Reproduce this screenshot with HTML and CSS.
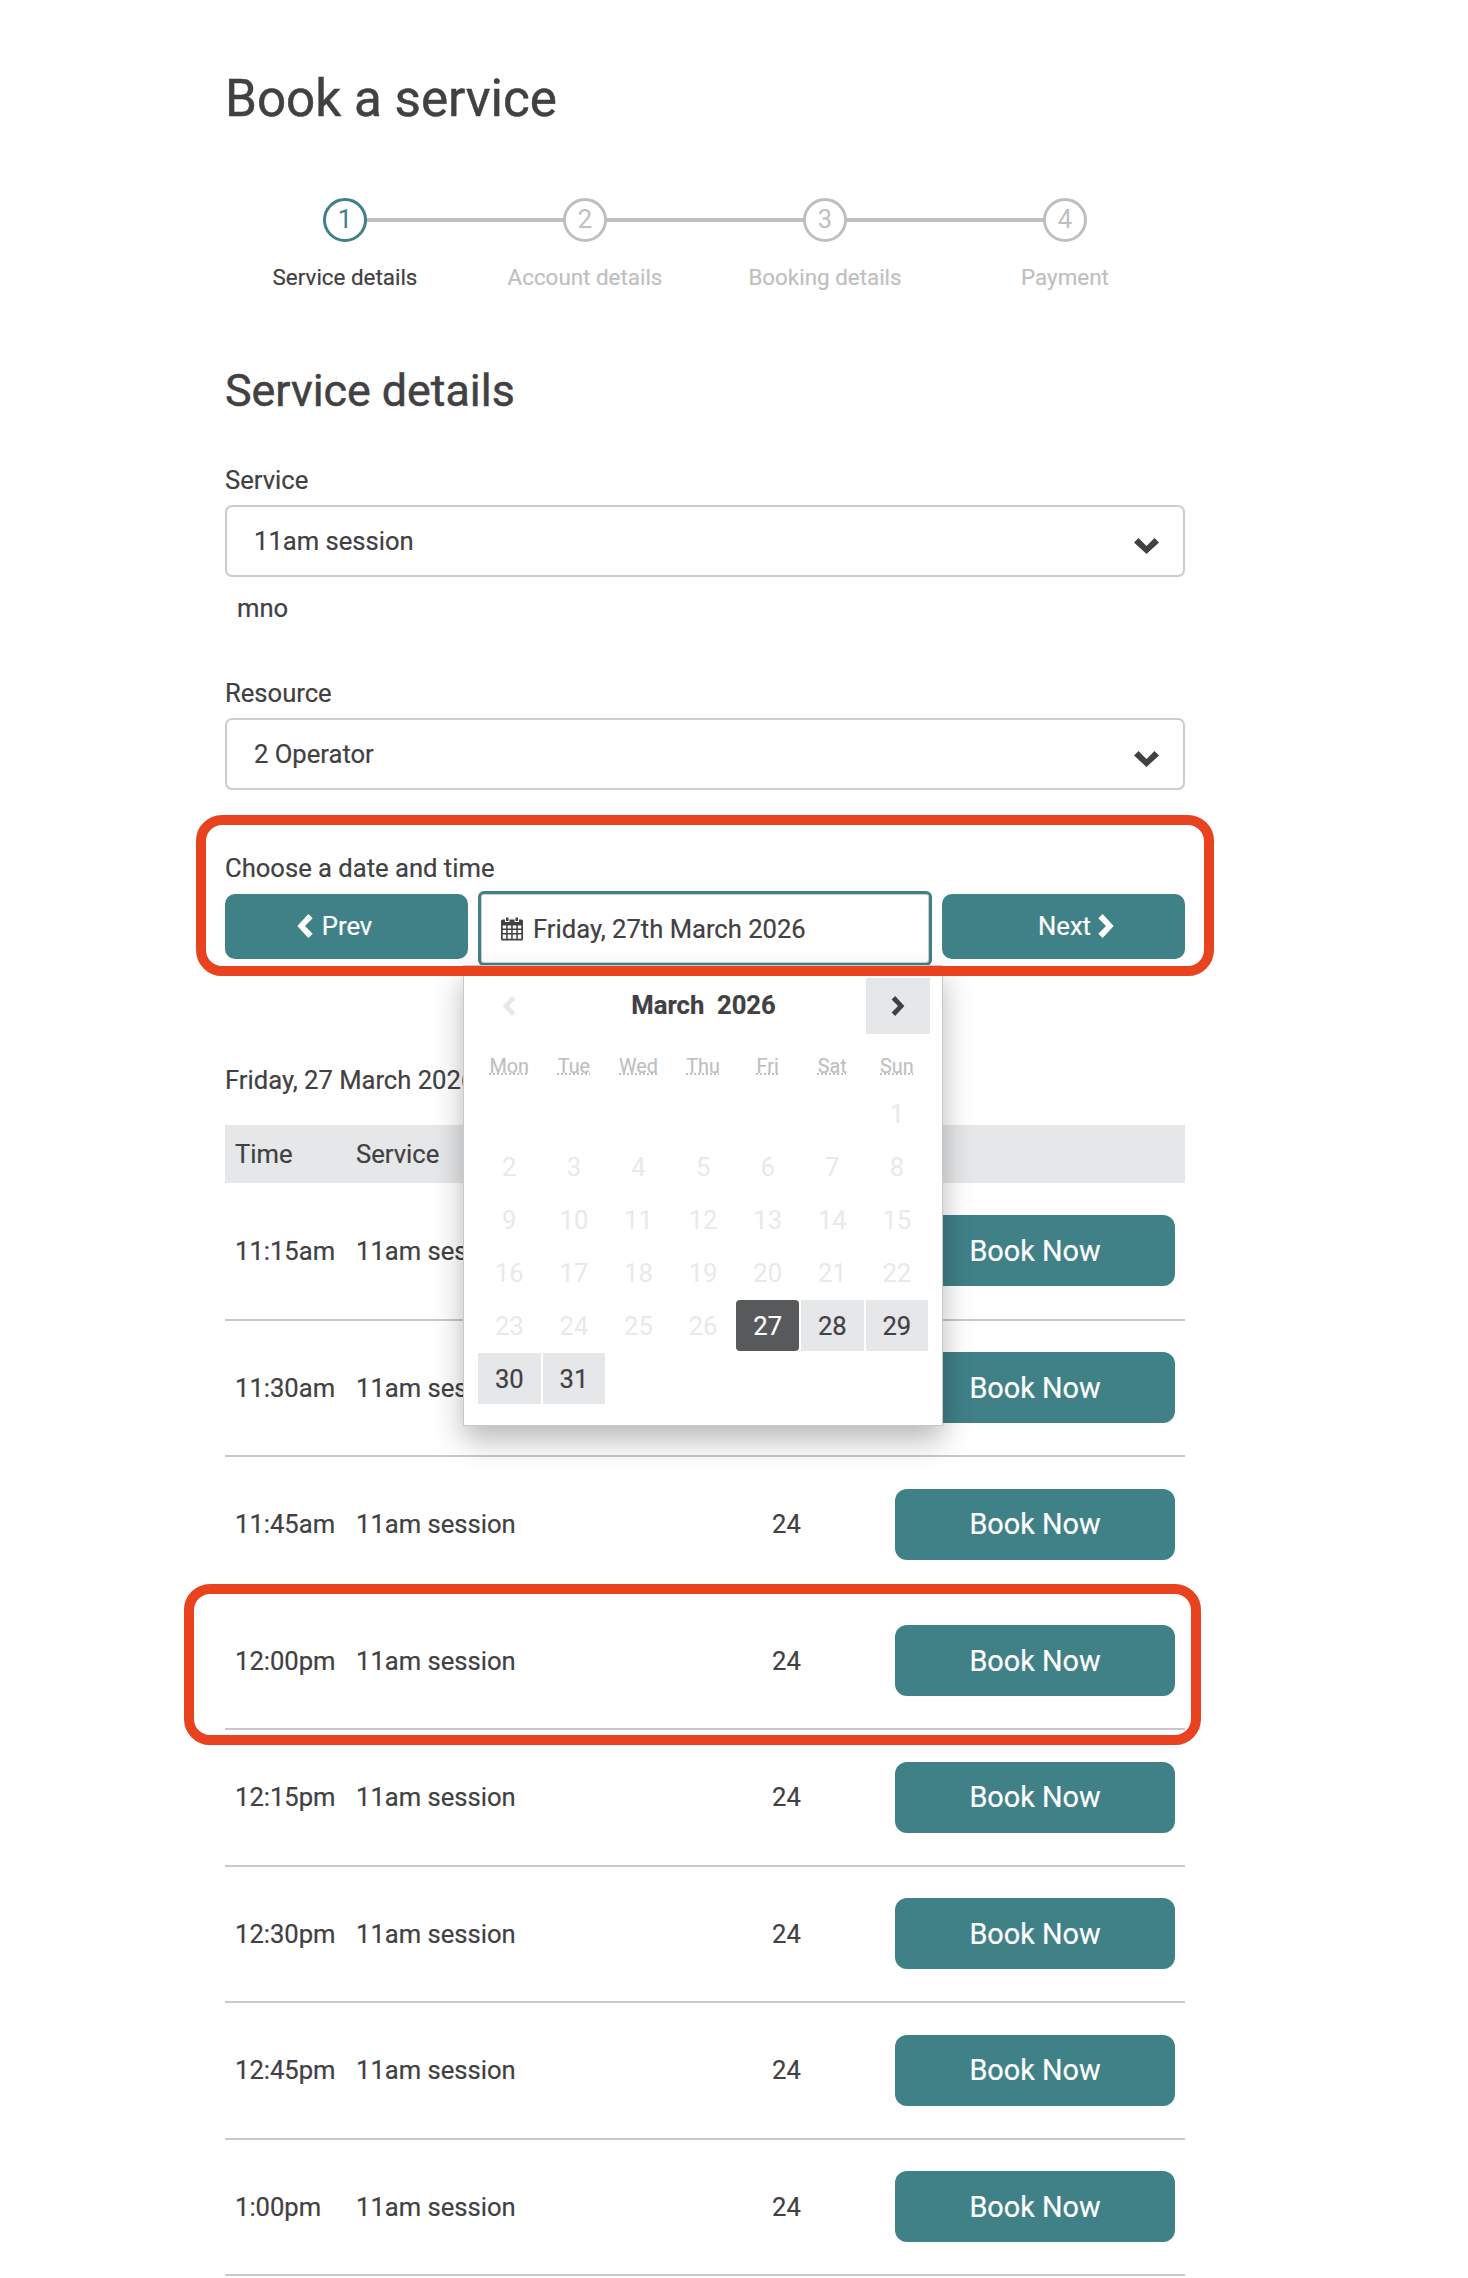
FILE: index.html
```html
<!DOCTYPE html>
<html lang="en">
<head>
<meta charset="utf-8">
<title>Book a service</title>
<link rel="stylesheet" href="styles.css">
</head>
<body>
<svg class="defs" width="0" height="0" aria-hidden="true">
  <symbol id="chev-r" viewBox="0 0 16 25"><path d="M4.500 0L16 12.500 4.500 25 0 20.500 8 12.500 0 4.500z"/></symbol>
  <symbol id="chev-l" viewBox="0 0 16 25"><path d="M11.500 0L16 4.500 8 12.500 16 20.500 11.500 25 0 12.500z"/></symbol>
  <symbol id="chev-d" viewBox="0 0 25 16"><path d="M0 4.500L4.500 0 12.500 8 20.500 0 25 4.500 12.500 16z"/></symbol>
</svg>
<main class="page">
  <h1 class="title">Book a service</h1>

  <ol class="steps">
    <li class="step active"><span class="dot">1</span><span class="step-label">Service details</span></li>
    <li class="step"><span class="dot">2</span><span class="step-label">Account details</span></li>
    <li class="step"><span class="dot">3</span><span class="step-label">Booking details</span></li>
    <li class="step"><span class="dot">4</span><span class="step-label">Payment</span></li>
  </ol>

  <h2 class="subtitle">Service details</h2>

  <div class="field">
    <div class="label">Service</div>
    <div class="select">11am session<svg class="select-chev"><use href="#chev-d"/></svg></div>
    <div class="note">mno</div>
  </div>

  <div class="field field-res">
    <div class="label">Resource</div>
    <div class="select">2 Operator<svg class="select-chev"><use href="#chev-d"/></svg></div>
  </div>

  <div class="date-field">
    <div class="label">Choose a date and time</div>
    <div class="date-row">
      <button class="nav-btn nav-prev"><svg class="nav-chev"><use href="#chev-l"/></svg>Prev</button>
      <div class="date-input">
        <svg class="cal-icon" viewBox="0 0 24 24"><path d="M6 0.5h2.5v3.6H6zM15.5 0.5H18v3.6h-2.5z"/><path fill-rule="evenodd" d="M2.5 2.5H5v2.6h4.5V2.5h5v2.6H19V2.5h2.5A1.5 1.5 0 0 1 23 4v18a1.500 1.500 0 0 1-1.500 1.500h-19A1.500 1.500 0 0 1 1 22V4a1.500 1.500 0 0 1 1.500-1.500zM2.700 8.500v3.100h3.500V8.500zm5 0v3.100h3.500V8.500zm5 0v3.100h3.600V8.500zm5.100 0v3.100h3.500V8.500zM2.700 13v3.100h3.500V13zm5 0v3.100h3.500V13zm5 0v3.100h3.600V13zm5.100 0v3.100h3.500V13zM2.700 17.500v4.300h3.500v-4.300zm5 0v4.300h3.500v-4.300zm5 0v4.300h3.600v-4.300zm5.100 0v4.300h3.500v-4.300z"/></svg>
        Friday, 27th March 2026
      </div>
      <button class="nav-btn nav-next">Next<svg class="nav-chev next"><use href="#chev-r"/></svg></button>
    </div>
  </div>

  <div class="result-date">Friday, 27 March 2026</div>

  <table class="slots">
    <thead>
      <tr><th class="c-time">Time</th><th class="c-service">Service</th><th class="c-count"></th><th class="c-book"></th></tr>
    </thead>
    <tbody>
      <tr><td>11:15am</td><td>11am session</td><td>24</td><td><button class="book">Book Now</button></td></tr>
      <tr><td>11:30am</td><td>11am session</td><td>24</td><td><button class="book">Book Now</button></td></tr>
      <tr><td>11:45am</td><td>11am session</td><td>24</td><td><button class="book">Book Now</button></td></tr>
      <tr><td>12:00pm</td><td>11am session</td><td>24</td><td><button class="book">Book Now</button></td></tr>
      <tr><td>12:15pm</td><td>11am session</td><td>24</td><td><button class="book">Book Now</button></td></tr>
      <tr><td>12:30pm</td><td>11am session</td><td>24</td><td><button class="book">Book Now</button></td></tr>
      <tr><td>12:45pm</td><td>11am session</td><td>24</td><td><button class="book">Book Now</button></td></tr>
      <tr><td>1:00pm</td><td>11am session</td><td>24</td><td><button class="book">Book Now</button></td></tr>
    </tbody>
  </table>

  <div class="picker">
    <div class="picker-head">
      <span class="picker-prev"><svg class="picker-chev"><use href="#chev-l"/></svg></span>
      <span class="picker-month">March&nbsp;&nbsp;2026</span>
      <span class="picker-next"><svg class="picker-chev"><use href="#chev-r"/></svg></span>
    </div>
    <div class="picker-week">
      <abbr>Mon</abbr><abbr>Tue</abbr><abbr>Wed</abbr><abbr>Thu</abbr><abbr>Fri</abbr><abbr>Sat</abbr><abbr>Sun</abbr>
    </div>
    <div class="picker-days">
      <span></span><span></span><span></span><span></span><span></span><span></span><span class="off">1</span>
      <span class="off">2</span><span class="off">3</span><span class="off">4</span><span class="off">5</span><span class="off">6</span><span class="off">7</span><span class="off">8</span>
      <span class="off">9</span><span class="off">10</span><span class="off">11</span><span class="off">12</span><span class="off">13</span><span class="off">14</span><span class="off">15</span>
      <span class="off">16</span><span class="off">17</span><span class="off">18</span><span class="off">19</span><span class="off">20</span><span class="off">21</span><span class="off">22</span>
      <span class="off">23</span><span class="off">24</span><span class="off">25</span><span class="off">26</span><span class="sel">27</span><span class="avail">28</span><span class="avail">29</span>
      <span class="avail">30</span><span class="avail">31</span>
    </div>
  </div>

  <div class="mark mark-date"></div>
  <div class="mark mark-row"></div>
</main>
</body>
</html>
```

FILE: styles.css
```css
* { box-sizing: border-box; }
html, body { margin: 0; padding: 0; }
body {
  background: #fff;
  color: #414042;
  font-family: Roboto, "Liberation Sans", sans-serif;
  font-size: 25.6px;
  line-height: 36px;
  height: 2278px;
  overflow: hidden;
  -webkit-text-stroke: 0.2px;
}
.defs { position: absolute; }
.page { position: relative; width: 960px; margin-left: 225px; padding-top: 64px; }

.title { margin: 0; font-size: 51.2px; line-height: 70px; font-weight: 400; -webkit-text-stroke: 0.5px; }

.steps {
  list-style: none; margin: 64px 0 0; padding: 0;
  display: flex; width: 960px;
}
.step {
  position: relative; width: 240px;
  display: flex; flex-direction: column; align-items: center;
  color: #bfbfbf; font-size: 22.4px; line-height: 30px;
}
.step:not(:last-child)::after {
  content: ""; position: absolute; left: 120px; width: 240px; top: 20px; height: 4px; background: #bfbfbf;
}
.dot {
  position: relative; z-index: 1;
  width: 44px; height: 44px; border-radius: 50%;
  border: 3px solid #bfbfbf; background: #fff;
  display: flex; align-items: center; justify-content: center;
  font-size: 25.6px; line-height: 1; -webkit-text-stroke: 0;
}
.step.active .dot { border-color: #3f8187; color: #3f8187; }
.step.active { color: #414042; }
.step-label { margin-top: 20px; }

.subtitle { margin: 69px 0 0; font-size: 44.8px; line-height: 60px; font-weight: 400; -webkit-text-stroke: 0.5px; }

.field { margin-top: 41px; }
.field-res { margin-top: 49px; }
.label { line-height: 36px; }
.select {
  position: relative; height: 72px; margin-top: 7px; padding-left: 27px;
  border: 2px solid #cccccc; border-radius: 7px;
  display: flex; align-items: center;
}
.select-chev { position: absolute; right: 24px; top: 31px; width: 25px; height: 16px; fill: #414042; }
.note { padding-left: 12px; margin-top: 13px; }

.date-field { margin-top: 60px; }
.date-row { display: flex; align-items: flex-start; margin-top: 5px; }
.nav-btn {
  width: 243px; height: 65px; margin-top: 3px; border: 0; border-radius: 10px;
  background: #3f8187; color: #fff; font: inherit;
  display: flex; align-items: center; justify-content: center;
}
.nav-prev { padding: 0 24px 2px 0; }
.nav-next { padding: 0 0 2px 25px; }
.nav-chev { width: 16px; height: 24px; fill: #fff; margin-right: 9px; }
.nav-chev.next { margin: 0 0 0 7px; }
.date-input {
  width: 454px; height: 75px; margin: 0 10px;
  border: 3px solid #3f8187; border-radius: 6px; padding-left: 19px;
  box-shadow: inset 0 0 0 1px #cfcfcf;
  display: flex; align-items: center; gap: 9px;
}
.cal-icon { width: 24px; height: 26px; fill: #414042; }

.result-date { margin-top: 96px; }

.slots { width: 960px; table-layout: fixed; border-collapse: collapse; margin-top: 27px; }
.slots th { height: 58px; background: #e6e7e8; font-weight: 400; text-align: left; padding: 0 0 0 11px; }
.slots td { height: 136.5px; padding: 0 0 0 11px; border-bottom: 2px solid #c8c8c8; }
.slots th:first-child, .slots td:first-child { padding-left: 10px; }
.slots td:nth-child(3) { padding-left: 10px; }
.c-time { width: 120px; }
.c-service { width: 417px; }
.c-count { width: 160px; }
.c-book { width: 263px; }
.slots td:last-child { padding: 0; }
.book {
  display: block; width: 280px; height: 71px; margin-left: -27px;
  border: 0; border-radius: 12px;
  background: #3f8187; color: #fff; font: inherit; font-size: 28.8px;
}

.picker {
  position: absolute; left: 238px; top: 965px; width: 480px; height: 461px;
  background: #fff; border: 1px solid #c8c8c8;
  box-shadow: 0 14px 28px rgba(0,0,0,.28);
  padding: 12px 12px 0 13px;
}
.picker-head { display: flex; align-items: center; justify-content: space-between; height: 56px; }
.picker-prev { width: 64px; display: flex; align-items: center; justify-content: center; }
.picker-month { font-weight: 700; font-size: 25.6px; line-height: 30px; padding-bottom: 2px; }
.picker-next { width: 64px; height: 56px; background: #e6e7e8; display: flex; align-items: center; justify-content: center; }
.picker-chev { width: 14px; height: 20px; fill: #414042; }
.picker-prev .picker-chev { fill: #e8e8e8; }
.picker-week { display: grid; grid-template-columns: repeat(7, 64.600px); margin-top: 15px; height: 36px; justify-items: center; color: #bfbfbf; font-size: 19.8px; }
.picker-week abbr { text-decoration: underline dotted #bfbfbf; }
.picker-days { display: grid; grid-template-columns: repeat(7, 64.600px); grid-auto-rows: 53px; margin-top: 2px; }
.picker-days span { display: flex; align-items: center; justify-content: center; margin: 1px; }
.off { color: #e9e9e9; -webkit-text-stroke: 0; }
.avail { background: #e6e7e8; }
.sel { background: #58595b; color: #fff; border-radius: 4px; }

.mark { position: absolute; border: 10px solid #e8421e; border-radius: 26px; pointer-events: none; }
.mark-date { left: -29px; top: 815px; width: 1018px; height: 161px; }
.mark-row { left: -41px; top: 1584px; width: 1017px; height: 161px; }
```
